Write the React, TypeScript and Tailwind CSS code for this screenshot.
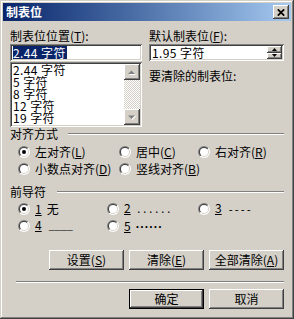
import React from "react";

const raised =
  "bg-[#d4d0c8] shadow-[inset_-1px_-1px_#404040,inset_1px_1px_#ffffff,inset_-2px_-2px_#808080,inset_2px_2px_#d4d0c8]";
const sunken =
  "shadow-[inset_1px_1px_#808080,inset_-1px_-1px_#ffffff,inset_2px_2px_#404040,inset_-2px_-2px_#d4d0c8]";
const mono = "font-['Liberation_Mono',monospace] text-[10px]";

function Radio({ checked }: { checked?: boolean }) {
  return (
    <svg width="12" height="12" viewBox="0 0 12 12" className="shrink-0">
      <defs>
        <linearGradient id="rgo" x1="0" y1="0" x2="1" y2="1">
          <stop offset="0.5" stopColor="#808080" />
          <stop offset="0.5" stopColor="#ffffff" />
        </linearGradient>
        <linearGradient id="rgi" x1="0" y1="0" x2="1" y2="1">
          <stop offset="0.5" stopColor="#404040" />
          <stop offset="0.5" stopColor="#d4d0c8" />
        </linearGradient>
      </defs>
      <circle cx="6" cy="6" r="6" fill="url(#rgo)" />
      <circle cx="6" cy="6" r="5" fill="url(#rgi)" />
      <circle cx="6" cy="6" r="4" fill="#ffffff" />
      {checked && <circle cx="6" cy="6" r="2" fill="#000000" />}
    </svg>
  );
}

function RadioItem({
  checked,
  className,
  children,
}: {
  checked?: boolean;
  className?: string;
  children: React.ReactNode;
}) {
  return (
    <div className={`flex items-center gap-[5px] ${className ?? ""}`}>
      <Radio checked={checked} />
      <span className="whitespace-nowrap flex items-baseline">{children}</span>
    </div>
  );
}

function Arrow({ up, color = "#808080" }: { up?: boolean; color?: string }) {
  return (
    <svg width="8" height="5" viewBox="0 0 8 5">
      {up ? (
        <>
          <path d="M4 1 L8 5 L1 5 Z" fill="#ffffff" />
          <path d="M3.5 0.5 L7 4 L0 4 Z" fill={color} />
        </>
      ) : (
        <>
          <path d="M1 1 L8 1 L4.5 5 Z" fill="#ffffff" />
          <path d="M0 0.5 L7 0.5 L3.5 4 Z" fill={color} />
        </>
      )}
    </svg>
  );
}

function Etched({ className }: { className?: string }) {
  return (
    <div
      className={`h-[2px] border-t border-t-[#808080] border-b border-b-white ${className ?? ""}`}
    />
  );
}

function Btn({
  children,
  def,
}: {
  children: React.ReactNode;
  def?: boolean;
}) {
  return (
    <div
      className={`w-[75px] h-[20px] flex items-center justify-center bg-[#d4d0c8] ${
        def
          ? "shadow-[inset_0_0_0_1px_#000000,inset_-2px_-2px_#404040,inset_2px_2px_#ffffff,inset_-3px_-3px_#808080,inset_3px_3px_#d4d0c8]"
          : "shadow-[inset_-1px_-1px_#404040,inset_1px_1px_#ffffff,inset_-2px_-2px_#808080,inset_2px_2px_#d4d0c8]"
      }`}
    >
      <span className="whitespace-nowrap">{children}</span>
    </div>
  );
}

export default function App() {
  const items = ["2.44 字符", "5 字符", "8 字符", "12 字符", "19 字符"];
  return (
    <div className="w-[294px] h-[319px] bg-[#d4d0c8] p-[3px] flex flex-col overflow-hidden font-['Noto_Sans_CJK_SC',sans-serif] text-[12px] leading-[12px] text-black shadow-[inset_-1px_-1px_#404040,inset_1px_1px_#d4d0c8,inset_-2px_-2px_#808080,inset_2px_2px_#ffffff]">
      {/* Title bar */}
      <div className="h-[18px] shrink-0 flex items-center justify-between pl-[3px] pr-[2px] bg-linear-to-r from-[#0a246a] to-[#a6caf0]">
        <span className="text-white font-bold text-[12px] leading-[12px]">制表位</span>
        <div className={`w-[16px] h-[14px] ${raised} flex items-center justify-center`}>
          <svg width="8" height="7" viewBox="0 0 8 7">
            <path d="M0.8 0.3 L7.2 6.7 M7.2 0.3 L0.8 6.7" stroke="#000" strokeWidth="1.7" />
          </svg>
        </div>
      </div>

      {/* Content */}
      <div className="flex-1 px-[7px] pt-[9px] flex flex-col">
        <div className="flex gap-[7px]">
          <div className="w-[132px] flex flex-col">
            <div className="h-[12px] whitespace-nowrap">
              制表位位置(<u>T</u>):
            </div>
            <div className={`mt-[2px] h-[17px] bg-white ${sunken} flex items-center px-[3px]`}>
              <span className="bg-[#0a246a] text-white leading-[13px] pr-[1px] tracking-[0.4px]">2.44 字符</span>
            </div>
            <div className={`mt-[1px] h-[65px] bg-white ${sunken} p-[2px] flex`}>
              <div className="flex-1 flex flex-col pl-[1px] tracking-[0.4px]">
                {items.map((it) => (
                  <div key={it} className="h-[12px] leading-[12px] whitespace-nowrap">
                    {it}
                  </div>
                ))}
              </div>
              <div className="w-[16px] flex flex-col">
                <div className={`h-[16px] ${raised} flex items-center justify-center`}>
                  <Arrow up />
                </div>
                <div className="flex-1 bg-[repeating-conic-gradient(#ffffff_0_25%,#d4d0c8_0_50%)] bg-[length:2px_2px]" />
                <div className={`h-[16px] ${raised} flex items-center justify-center`}>
                  <Arrow />
                </div>
              </div>
            </div>
          </div>

          <div className="flex-1 flex flex-col">
            <div className="h-[12px] whitespace-nowrap">
              默认制表位(<u>F</u>):
            </div>
            <div className={`mt-[2px] h-[17px] bg-white ${sunken} p-[2px] flex`}>
              <div className="flex-1 flex items-center pl-[1px] tracking-[0.4px]">1.95 字符</div>
              <div className="w-[15px] flex flex-col">
                <div className={`flex-1 ${raised} flex items-center justify-center`}>
                  <svg width="5" height="3" viewBox="0 0 5 3">
                    <path d="M2.5 0 L5 3 L0 3 Z" fill="#000" />
                  </svg>
                </div>
                <div className={`flex-1 ${raised} flex items-center justify-center`}>
                  <svg width="5" height="3" viewBox="0 0 5 3">
                    <path d="M0 0 L5 0 L2.5 3 Z" fill="#000" />
                  </svg>
                </div>
              </div>
            </div>
            <div className="mt-[9px] h-[12px] whitespace-nowrap">要清除的制表位:</div>
          </div>
        </div>

        {/* 对齐方式 */}
        <div className="mt-[1px] h-[12px] flex items-center">
          <span className="whitespace-nowrap">对齐方式</span>
          <Etched className="ml-[10px] flex-1" />
        </div>
        <div className="mt-[6px] h-[12px] flex items-center pl-[8px]">
          <RadioItem checked className="w-[101px]">
            左对齐(<u>L</u>)
          </RadioItem>
          <RadioItem className="w-[79px]">
            居中(<u>C</u>)
          </RadioItem>
          <RadioItem>
            右对齐(<u>R</u>)
          </RadioItem>
        </div>
        <div className="mt-[5px] h-[12px] flex items-center pl-[8px]">
          <RadioItem className="w-[101px]">
            小数点对齐(<u>D</u>)
          </RadioItem>
          <RadioItem>
            竖线对齐(<u>B</u>)
          </RadioItem>
        </div>

        {/* 前导符 */}
        <div className="mt-[11px] h-[12px] flex items-center">
          <span className="whitespace-nowrap">前导符</span>
          <Etched className="ml-[11px] flex-1" />
        </div>
        <div className="mt-[5px] h-[12px] flex items-center pl-[8px]">
          <RadioItem checked className="w-[89px]">
            <u>1</u>
            <span className="ml-[5px]">无</span>
          </RadioItem>
          <RadioItem className="w-[91px]">
            <u>2</u>
            <span className={`${mono} ml-[5px]`}>......</span>
          </RadioItem>
          <RadioItem>
            <u>3</u>
            <span className={`${mono} ml-[6px]`}>----</span>
          </RadioItem>
        </div>
        <div className="mt-[5px] h-[12px] flex items-center pl-[8px]">
          <RadioItem className="w-[89px]">
            <u>4</u>
            <span className={`${mono} ml-[7px]`}>____</span>
          </RadioItem>
          <RadioItem className="w-[91px]">
            <u>5</u>
            <span className="ml-[5px] font-['Liberation_Sans',sans-serif] font-bold text-[12px] tracking-[0.5px]">······</span>
          </RadioItem>
        </div>

        {/* Buttons */}
        <div className="mt-[18px] flex justify-end gap-[5px]">
          <Btn>
            设置(<u>S</u>)
          </Btn>
          <Btn>
            清除(<u>E</u>)
          </Btn>
          <Btn>
            全部清除(<u>A</u>)
          </Btn>
        </div>

        <Etched className="mt-[11px] ml-[6px]" />

        <div className="mt-[6px] flex justify-end gap-[5px]">
          <Btn def>确定</Btn>
          <Btn>取消</Btn>
        </div>
      </div>
    </div>
  );
}
